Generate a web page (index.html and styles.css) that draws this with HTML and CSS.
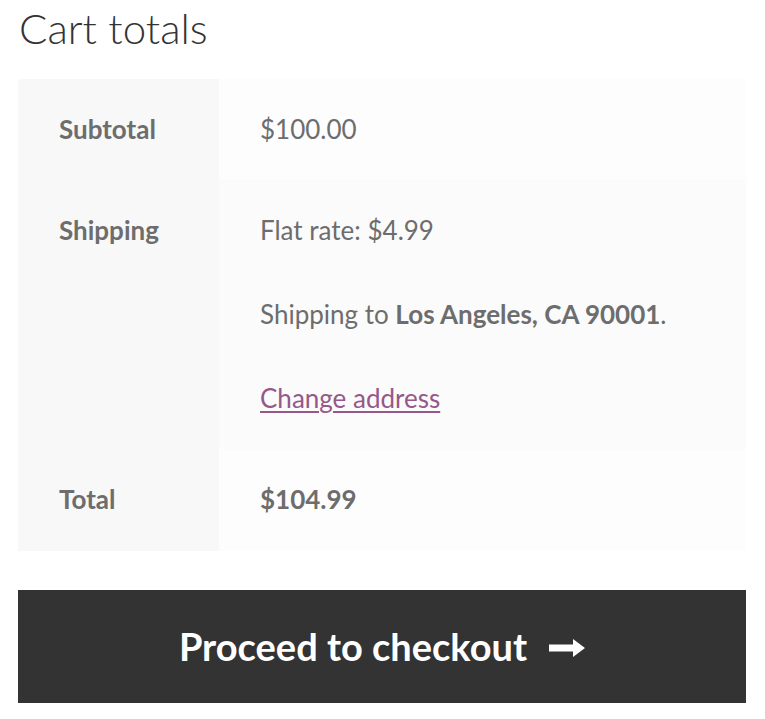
FILE: index.html
```html
<!DOCTYPE html>
<html>
<head>
<meta charset="utf-8">
<link rel="stylesheet" href="styles.css">
</head>
<body>
<div class="cart-totals">
  <h2 class="title">Cart totals</h2>
  <table class="totals">
    <tbody>
      <tr class="row">
        <th>Subtotal</th>
        <td>$100.00</td>
      </tr>
      <tr class="row even">
        <th>Shipping</th>
        <td>
          <p>Flat rate: $4.99</p>
          <p>Shipping to <strong>Los Angeles, CA 90001</strong>.</p>
          <p class="last"><a href="#" class="change">Change address</a></p>
        </td>
      </tr>
      <tr class="row total">
        <th>Total</th>
        <td><strong>$104.99</strong></td>
      </tr>
    </tbody>
  </table>
  <a href="#" class="checkout">Proceed to checkout
    <svg class="arrow" width="36" height="18" viewBox="0 0 36 18"><path d="M0 5.5h24V0l12 9-12 9v-5.5H0z" fill="#fff"/></svg>
  </a>
</div>
</body>
</html>
```
FILE: styles.css
```css
html, body {
  margin: 0;
  padding: 0;
  background: #fff;
}
body {
  font-family: Lato, "Open Sans", sans-serif;
  color: #6d6d6d;
  font-size: 26px;
  line-height: 1.618;
}
.cart-totals {
  width: 728px;
  margin-left: 18px;
}
.title {
  margin: 0 0 0 1px;
  padding-top: 0;
  height: 79px;
  font-weight: 300;
  font-size: 42px;
  line-height: 56px;
  color: #333;
}
.totals {
  width: 728px;
  border-collapse: collapse;
  border-spacing: 0;
  margin: 0 0 39px;
}
.totals th {
  width: 201px;
  box-sizing: border-box;
  text-align: left;
  vertical-align: top;
  background: #f8f8f8;
  font-weight: 700;
  padding: 29px 41px 30px;
}
.totals td {
  vertical-align: top;
  background: #fdfdfd;
  padding: 29px 41px 30px;
}
.totals .total th,
.totals .total td {
  padding-bottom: 31px;
}
.totals .even td {
  background: #fbfbfb;
}
.totals p {
  margin: 0 0 42px;
}
.totals p.last {
  margin-bottom: 0;
}
.totals strong {
  font-weight: 700;
}
.change {
  color: #96588a;
  text-decoration: underline;
  text-underline-offset: 3px;
}
.checkout {
  display: flex;
  align-items: center;
  justify-content: center;
  gap: 22px;
  height: 113px;
  background: #333;
  color: #fff;
  font-weight: 700;
  font-size: 38px;
  text-decoration: none;
}
.arrow {
  display: block;
  margin-top: 2px;
}
```
